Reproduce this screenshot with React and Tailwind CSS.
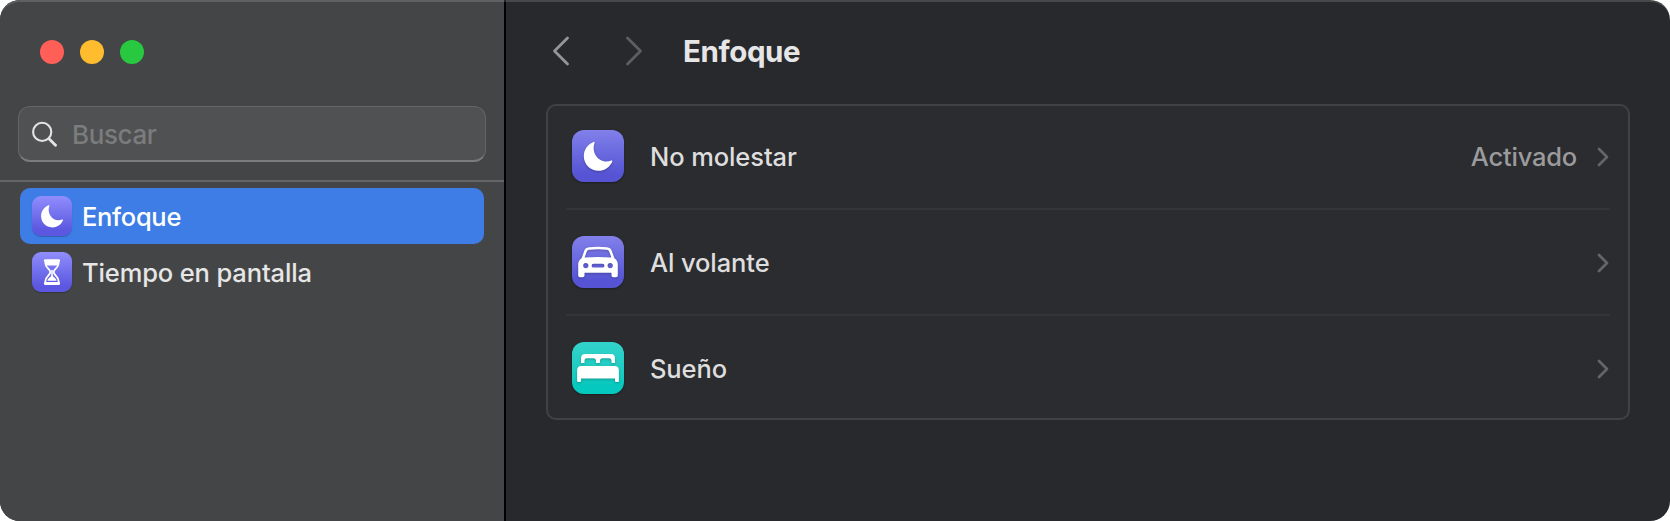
function Moon({ className }) {
  return (
    <svg viewBox="0 0 52 52" className={className} fill="#fff">
      <path d="M21.6 11.9C22.3 11.6 22.8 12.1 22.5 12.9C19.4 21.6 25.1 31.4 34.5 31.4C36.3 31.4 37.9 31 39.2 30.5C40 30.2 40.6 30.7 40.3 31.4C38 37.1 32.5 40.8 26.3 40.8C18.2 40.8 11.8 34.4 11.8 26.1C11.8 19.6 15.7 14.1 21.6 11.9Z" />
    </svg>
  );
}

function Hourglass({ className }) {
  return (
    <svg viewBox="0 0 40 40" className={className}>
      <path
        d="M13.400 9V11.500C13.400 16 18.300 17 18.300 20S13.400 24.500 13.400 29V31H26.600V29C26.600 24.500 21.700 23 21.700 20S26.600 16 26.600 11.500V9Z"
        fill="none"
        stroke="#fff"
        strokeWidth="1.800"
      />
      <path d="M12.800 7.300H27.200C28.400 7.300 28.400 9.900 27.200 9.900H12.800C11.600 9.900 11.600 7.300 12.800 7.300ZM12.800 30.100H27.200C28.400 30.100 28.400 32.900 27.200 32.900H12.800C11.600 32.900 11.600 30.100 12.800 30.100Z" fill="#fff" />
      <path d="M13.400 9.500H26.600V12.500L25.500 13.500H14.500L13.400 12.500ZM19.200 18H20.800V23.600C21 25.200 24.300 26.400 24.600 28.800H15.400C15.700 26.400 19 25.200 19.200 23.600Z" fill="#fff" />
    </svg>
  );
}

function Car({ className }) {
  return (
    <svg viewBox="0 0 52 52" className={className}>
      <path
        fill="#fff"
        fillRule="evenodd"
        d="M17 11.200Q26 10.300 35 11.200C37.600 11.500 38.900 12.600 39.700 14.700L42.400 22.300C44.700 24 45.800 25.700 45.800 28.600V39.300C45.800 40.600 45.100 41.300 43.900 41.300H41.400C40.200 41.300 39.500 40.600 39.500 39.300V36.800H12.500V39.300C12.500 40.600 11.800 41.300 10.600 41.300H8.100C6.900 41.300 6.200 40.600 6.200 39.300V28.600C6.200 25.700 7.300 24 9.600 22.300L12.300 14.700C13.100 12.600 14.400 11.500 17 11.200ZM17.300 13.700C16 13.900 15.200 14.400 14.700 15.700L12.600 21.600Q26 20.300 39.400 21.600L37.300 15.700C36.800 14.400 36 13.900 34.700 13.700Q26 12.900 17.300 13.700ZM13.800 27A2.600 2.600 0 1 0 13.800 32.200A2.600 2.600 0 1 0 13.800 27ZM38.200 27A2.600 2.600 0 1 0 38.200 32.200A2.600 2.600 0 1 0 38.200 27ZM21.500 27.800A1.900 1.900 0 0 0 21.500 31.600H30.500A1.900 1.900 0 0 0 30.500 27.800Z"
      />
    </svg>
  );
}

function Bed({ className }) {
  return (
    <svg viewBox="0 0 52 52" className={className} fill="#fff">
      <path d="M9 21V16C9 13.300 10.500 12 13 12H39C41.500 12 43 13.300 43 16V21H39.500V18.700C39.500 17.200 38.700 16.300 37.300 16.300H30.300C28.900 16.300 28 17.200 28 18.700V21H24V18.700C24 17.200 23.100 16.300 21.700 16.300H14.700C13.300 16.300 12.500 17.200 12.500 18.700V21Z" />
      <path d="M9.300 24H42.700C45.400 24 46.900 25.500 46.900 28.200V38.400C46.900 39.500 46.300 40 45.400 40H44.500C43.600 40 43 39.500 43 38.400V36.400H9V38.400C9 39.500 8.400 40 7.500 40H6.600C5.700 40 5.100 39.500 5.100 38.400V28.200C5.100 25.500 6.600 24 9.300 24Z" />
    </svg>
  );
}

function Chevron({ className }) {
  return (
    <svg viewBox="0 0 12 20" className={className} fill="none" stroke="currentColor" strokeWidth="2.700" strokeLinecap="round" strokeLinejoin="round">
      <path d="M2 2L10 10L2 18" />
    </svg>
  );
}

function NavArrow({ d, className }) {
  return (
    <svg viewBox="0 0 18 30" className={className} fill="none" stroke="currentColor" strokeWidth="2.800" strokeLinecap="round" strokeLinejoin="round">
      <path d={d} />
    </svg>
  );
}

const rows = [
  { name: "No molestar", status: "Activado", Icon: Moon, tile: "from-[#8280ea] to-[#5654d4]" },
  { name: "Al volante", Icon: Car, tile: "from-[#8280ea] to-[#5654d4]" },
  { name: "Sueño", Icon: Bed, tile: "from-[#32d3ca] to-[#05c8be]" },
];

export default function App() {
  return (
    <div className="h-[521px] w-[1670px] bg-white font-['Inter',sans-serif]">
      <div className="relative flex h-full overflow-hidden rounded-[20px] bg-[#28292c]">
        <aside className="flex w-[506px] shrink-0 flex-col border-r-2 border-black bg-[#444546]">
          <div className="flex gap-4 pt-10 pl-10">
            <span className="size-6 rounded-full bg-[#ff5f57]" />
            <span className="size-6 rounded-full bg-[#febc2e]" />
            <span className="size-6 rounded-full bg-[#28c840]" />
          </div>
          <div className="mt-[42px] ml-[18px] flex h-14 w-[468px] items-center rounded-[12px] border border-[#646566] border-b-2 border-b-[#7b7c7d] bg-[#505152] pl-3">
            <svg viewBox="0 0 28 28" className="size-7 text-[#e4e4e4]" fill="none" stroke="currentColor" strokeLinecap="round">
              <circle cx="11.200" cy="11.900" r="9.100" strokeWidth="2.100" />
              <path d="M18 18.800L24.500 25.200" strokeWidth="2.800" />
            </svg>
            <span className="mt-[3px] ml-[13px] text-[26px] leading-8 font-[450] tracking-[-0.4px] text-[#7b7c7d]">Buscar</span>
          </div>
          <div className="mt-[18px] h-0.5 bg-[#656667]" />
          <nav className="mt-1.5 ml-5 w-[464px] text-[25.500px] leading-8 font-[450]">
            <div className="flex h-14 items-center rounded-[10px] bg-[#3e7de6] pl-3 text-white">
              <div className="size-10 rounded-[9px] bg-linear-to-b from-[#918dfd] to-[#5c57e0] to-85% shadow-[0_1px_1px_rgba(0,0,0,0.25)]">
                <Moon className="size-10" />
              </div>
              <span className="mt-0.5 ml-[10px] tracking-[-0.3px]">Enfoque</span>
            </div>
            <div className="flex h-14 items-center pl-3 text-[#e6e6e6]">
              <div className="size-10 rounded-[9px] bg-linear-to-b from-[#918dfd] to-[#5c57e0] to-85% shadow-[0_1px_1px_rgba(0,0,0,0.25)]">
                <Hourglass className="size-10" />
              </div>
              <span className="mt-0.5 ml-[10px] tracking-[-0.130px]">Tiempo en pantalla</span>
            </div>
          </nav>
        </aside>
        <main className="flex grow flex-col px-10">
          <header className="flex h-[102px] items-center pl-1.5">
            <NavArrow d="M15.500 2L2.500 15L15.500 28" className="h-[30px] w-[18px] text-[#949597]" />
            <NavArrow d="M2.500 2L15.500 15L2.500 28" className="ml-[55px] h-[30px] w-[18px] text-[#5d5e60]" />
            <h1 className="ml-10 text-[29.500px] leading-9 font-bold tracking-[-0.400px] text-[#e6e6e7]">Enfoque</h1>
          </header>
          <section className="mt-0.5 h-[316px] rounded-[10px] border-2 border-[#414245] bg-[#2b2c2f] px-[18px]">
            {rows.map(({ name, status, Icon, tile }, i) => (
              <div key={name} className={i === 0 ? "h-[102px]" : "h-[106px] border-t-2 border-[#343538]"}>
                <div className={i === 0 ? "flex h-[100px] items-center pr-px pl-1.5" : "flex h-[104px] items-center pr-px pl-1.5"}>
                  <div className={`size-[52px] rounded-[12px] bg-linear-to-b to-85% shadow-[0_1px_2px_rgba(0,0,0,0.35)] ${tile}`}>
                    <Icon className="size-[52px] drop-shadow-[0_1px_1px_rgba(0,0,0,0.25)]" />
                  </div>
                  <span className="mt-0.5 ml-[26px] text-[25.500px] leading-8 font-[450] tracking-[-0.100px] text-[#dedede]">{name}</span>
                  <span className="mt-0.5 ml-auto text-[25.500px] leading-8 font-[450] tracking-[-0.200px] text-[#9b9b9d]">{status}</span>
                  <Chevron className="mt-0.5 ml-[20px] h-5 w-3 text-[#646567]" />
                </div>
              </div>
            ))}
          </section>
        </main>
        <div className="pointer-events-none absolute inset-x-0 top-0 h-5 rounded-t-[20px] border-t-2 border-white/15" />
      </div>
    </div>
  );
}
